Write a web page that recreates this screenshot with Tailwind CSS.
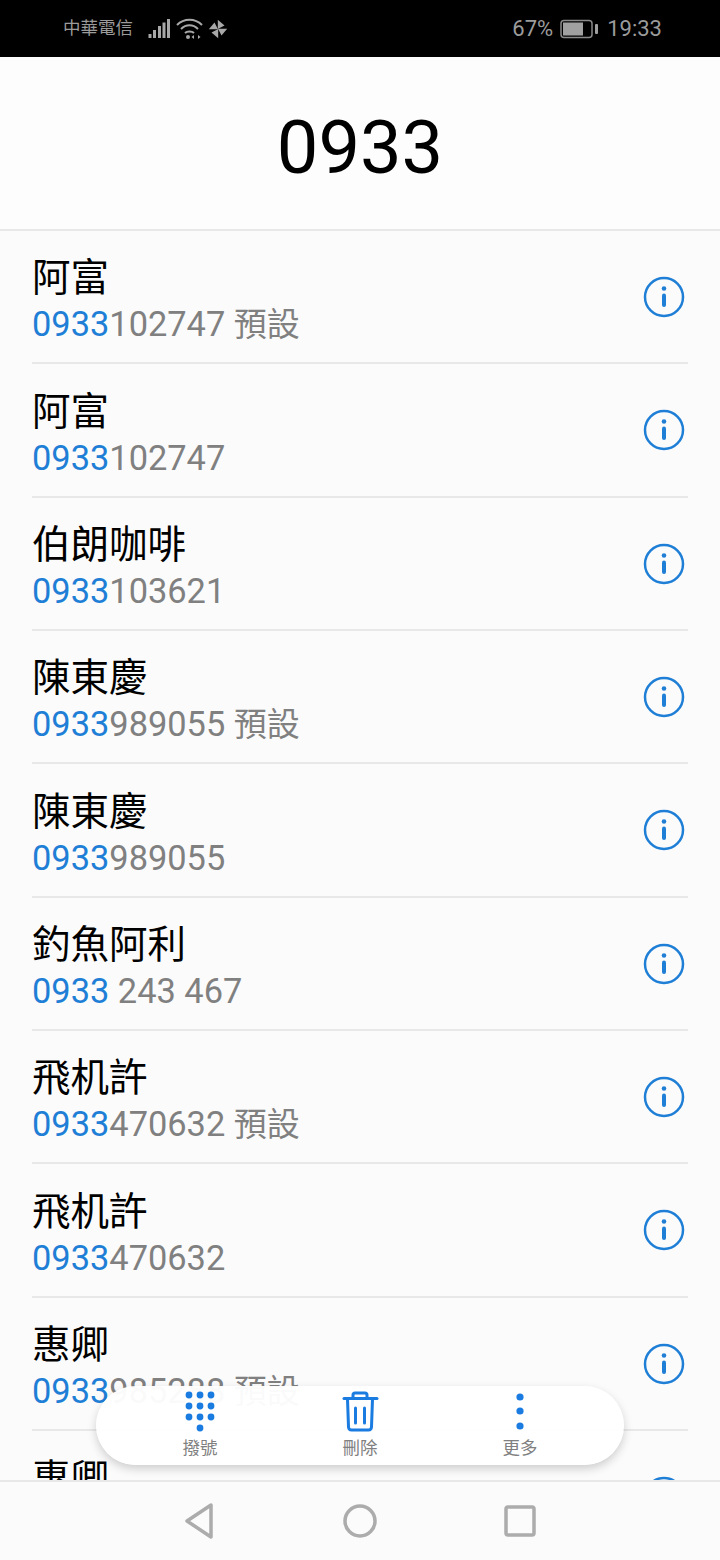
<!DOCTYPE html>
<html lang="zh-Hant">
<head>
    <meta charset="UTF-8">
    <meta name="viewport" content="width=device-width, initial-scale=1.0">
    <title>撥號</title>
    <script src="https://cdn.jsdelivr.net/npm/@tailwindcss/browser@4"></script>
</head>
<body class="bg-[#fbfbfb] font-['Roboto','Noto_Sans_CJK_TC',sans-serif]">
    <div class="relative w-[720px] h-[1560px] flex flex-col overflow-hidden">

        <!-- Status bar -->
        <div class="h-[57px] shrink-0 bg-black flex items-center pl-[63px] pr-[58px] text-[#9b9b9b]">
            <span class="text-[17.500px] leading-none">中華電信</span>
            <svg class="ml-[15px]" width="23" height="21" viewBox="0 0 23 21" fill="#a8a8a8">
                <rect x="0.500" y="16" width="3" height="4" />
                <rect x="5" y="12" width="3" height="8" />
                <rect x="10" y="8" width="3" height="12" />
                <rect x="14.500" y="4.500" width="3" height="15.500" />
                <rect x="19" y="1" width="3" height="19" />
            </svg>
            <svg class="ml-[5px]" width="27" height="22" viewBox="0 0 27 22" fill="none" stroke="#a8a8a8" stroke-width="2">
                <path d="M1 7 C8 0 19 0 26 7" />
                <path d="M5 11 C10 6 17 6 22 11" />
                <path d="M9 15 C11 13 16 13 18 15" />
                <circle cx="12" cy="19" r="2" fill="#a8a8a8" stroke="none" />
                <path d="M18 17 v4 l-2.500 -2 z M22 17 v4 l2.500 -2 z" fill="#a8a8a8" stroke="none" />
            </svg>
            <!-- Pinwheel: one blade, turned four times -->
            <svg class="ml-[5px]" width="20" height="20" viewBox="0 0 20 20" fill="#a8a8a8">
                <path d="M9.800 10 L9.800 0.800 L16.500 6.500 Z" />
                <path d="M9.800 10 L9.800 0.800 L16.500 6.500 Z" transform="rotate(90 10 10)" />
                <path d="M9.800 10 L9.800 0.800 L16.500 6.500 Z" transform="rotate(180 10 10)" />
                <path d="M9.800 10 L9.800 0.800 L16.500 6.500 Z" transform="rotate(270 10 10)" />
            </svg>

            <span class="ml-auto text-[22px] leading-none">67%</span>
            <svg class="ml-[7px]" width="38" height="20" viewBox="0 0 38 20" fill="none">
                <rect x="1" y="1.500" width="31" height="17" rx="3" stroke="#8a8a8a" stroke-width="1.500" />
                <rect x="3" y="3.500" width="20" height="13" fill="#a0a0a0" />
                <rect x="35" y="5" width="3" height="10" rx="1" fill="#a0a0a0" />
            </svg>
            <span class="ml-[9px] text-[22px] leading-none">19:33</span>
        </div>

        <!-- Dialed number -->
        <div class="h-[174px] shrink-0 flex items-center justify-center border-b-2 border-[#e8e8e8] bg-[#fdfdfd]">
            <span class="text-[74px] leading-none text-black mt-[10px]">0933</span>
        </div>

        <!-- Matched contacts -->
        <div id="matches" class="flex-1 min-h-0 overflow-hidden"></div>

        <!-- Bottom navigation -->
        <div class="h-[80px] shrink-0 flex items-center justify-center gap-[100px] border-t-2 border-[#e8e8e8] bg-[#fbfbfb]">
            <svg width="60" height="40" viewBox="0 0 60 40" fill="none" stroke="#acacac" stroke-width="3.500" stroke-linejoin="round">
                <path d="M41 4 V36 L17 20 Z" />
            </svg>
            <svg width="60" height="40" viewBox="0 0 60 40" fill="none" stroke="#acacac" stroke-width="3.500">
                <circle cx="30" cy="20" r="15" />
            </svg>
            <svg width="60" height="40" viewBox="0 0 60 40" fill="none" stroke="#acacac" stroke-width="3.500" stroke-linejoin="round">
                <rect x="16" y="6" width="28" height="28" rx="2" />
            </svg>
        </div>

        <!-- Floating action pill -->
        <div class="absolute left-[96px] top-[1386px] w-[528px] h-[79px] rounded-[40px] bg-white/[.96] shadow-[0_4px_10px_rgba(0,0,0,0.18)] flex px-[24px]">
            <div class="flex-1 flex flex-col items-center pt-[4px]">
                <svg width="32" height="44" viewBox="0 0 32 44" fill="#1a7be0">
                    <circle cx="5" cy="5" r="3.400" /><circle cx="16" cy="5" r="3.400" /><circle cx="27" cy="5" r="3.400" />
                    <circle cx="5" cy="16" r="3.400" /><circle cx="16" cy="16" r="3.400" /><circle cx="27" cy="16" r="3.400" />
                    <circle cx="5" cy="27" r="3.400" /><circle cx="16" cy="27" r="3.400" /><circle cx="27" cy="27" r="3.400" />
                    <circle cx="16" cy="38" r="3.400" />
                </svg>
                <span class="mt-[4px] text-[17.500px] leading-[20px] text-[#808080]">撥號</span>
            </div>
            <div class="flex-1 flex flex-col items-center pt-[4px]">
                <svg width="38" height="44" viewBox="0 0 38 44" fill="none" stroke="#1a7be0" stroke-width="3" stroke-linejoin="round" stroke-linecap="round">
                    <path d="M3 8.500 H36" />
                    <path d="M12 8 V5 Q12 3 14 3 H24 Q26 3 26 5 V8" />
                    <path d="M6.500 9 L7.500 37 Q7.700 40 10.500 40 H27.500 Q30.300 40 30.500 37 L31.500 9" />
                    <path d="M14.500 18 V33 M23.500 18 V33" />
                </svg>
                <span class="mt-[4px] text-[17.500px] leading-[20px] text-[#808080]">刪除</span>
            </div>
            <div class="flex-1 flex flex-col items-center pt-[4px]">
                <svg width="32" height="44" viewBox="0 0 32 44" fill="#1a7be0">
                    <circle cx="16" cy="7" r="3.600" /><circle cx="16" cy="21" r="3.600" /><circle cx="16" cy="36" r="3.600" />
                </svg>
                <span class="mt-[4px] text-[17.500px] leading-[20px] text-[#808080]">更多</span>
            </div>
        </div>
    </div>

    <script>
        const contacts = [
            { name: "阿富", rest: "102747", tag: "預設" },
            { name: "阿富", rest: "102747" },
            { name: "伯朗咖啡", rest: "103621" },
            { name: "陳東慶", rest: "989055", tag: "預設" },
            { name: "陳東慶", rest: "989055" },
            { name: "釣魚阿利", rest: " 243 467" },
            { name: "飛机許", rest: "470632", tag: "預設" },
            { name: "飛机許", rest: "470632" },
            { name: "惠卿", rest: "985288", tag: "預設" },
            { name: "惠卿", rest: "985288" }
        ];

        const infoIcon = `
            <svg width="42" height="42" viewBox="0 0 42 42" fill="none" class="shrink-0 mr-[3px] mt-[1px]">
                <circle cx="21" cy="21" r="19" stroke="#1f7fd6" stroke-width="2.500" />
                <circle cx="21" cy="12.500" r="2.300" fill="#1f7fd6" />
                <rect x="19" y="17.500" width="4" height="13.500" rx="2" fill="#1f7fd6" />
            </svg>`;

        document.getElementById("matches").innerHTML = contacts.map(c => `
            <div class="h-[133.33px] mx-[32px] flex items-center border-b-2 border-[#e8e8e8]">
                <div class="flex-1 min-w-0 pt-[10px]">
                    <div class="text-[38.500px] leading-[46px] text-black">${c.name}</div>
                    <div class="text-[34.400px] leading-[46px] text-[#808080] whitespace-pre"><span class="text-[#1f7fd6]">0933</span>${c.rest}${c.tag ? ` <span class="text-[33px]">${c.tag}</span>` : ""}</div>
                </div>
                ${infoIcon}
            </div>`).join("");
    </script>
</body>
</html>
